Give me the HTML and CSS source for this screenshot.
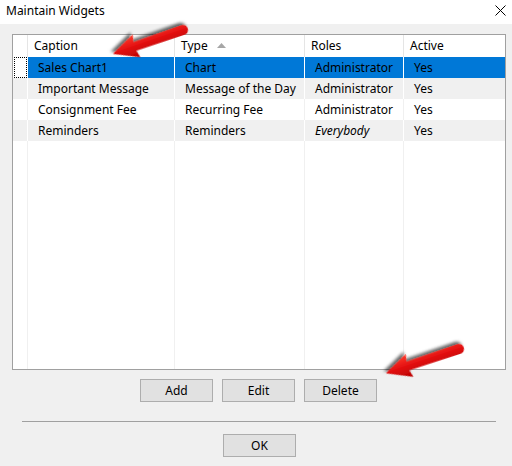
FILE: index.html
```html
<!DOCTYPE html>
<html>
<head>
<meta charset="utf-8">
<link rel="stylesheet" href="styles.css">
</head>
<body>
<div class="window">
  <div class="titlebar">
    <span class="title">Maintain Widgets</span>
    <svg class="close" width="11" height="11" viewBox="0 0 11 11"><path d="M0.5 0.5 L10.5 10.5 M10.5 0.5 L0.5 10.5" stroke="#000" stroke-width="1" fill="none"/></svg>
  </div>
  <div class="content">
    <div class="grid">
      <div class="col col-ind">
        <div class="hcell"></div>
        <div class="cell sel-ind"><span class="focus"></span></div>
        <div class="cell alt"></div>
        <div class="cell"></div>
        <div class="cell alt"></div>
        <div class="fill"></div>
      </div>
      <div class="col col-caption">
        <div class="hcell">Caption</div>
        <div class="cell sel">Sales Chart1</div>
        <div class="cell alt">Important Message</div>
        <div class="cell">Consignment Fee</div>
        <div class="cell alt">Reminders</div>
        <div class="fill"></div>
      </div>
      <div class="col col-type">
        <div class="hcell">Type<svg class="sort" width="9" height="5" viewBox="0 0 9 5"><path d="M0 5 L4.5 0 L9 5 Z" fill="#a6a6a6"/></svg></div>
        <div class="cell sel">Chart</div>
        <div class="cell alt">Message of the Day</div>
        <div class="cell">Recurring Fee</div>
        <div class="cell alt">Reminders</div>
        <div class="fill"></div>
      </div>
      <div class="col col-roles">
        <div class="hcell">Roles</div>
        <div class="cell sel">Administrator</div>
        <div class="cell alt">Administrator</div>
        <div class="cell">Administrator</div>
        <div class="cell alt italic">Everybody</div>
        <div class="fill"></div>
      </div>
      <div class="col col-active">
        <div class="hcell">Active</div>
        <div class="cell sel">Yes</div>
        <div class="cell alt">Yes</div>
        <div class="cell">Yes</div>
        <div class="cell alt">Yes</div>
        <div class="fill"></div>
      </div>
    </div>
    <div class="buttons">
      <button class="btn">Add</button>
      <button class="btn">Edit</button>
      <button class="btn">Delete</button>
    </div>
    <div class="separator"></div>
    <div class="okrow">
      <button class="btn">OK</button>
    </div>
  </div>
  <svg class="arrows" width="512" height="466" viewBox="0 0 512 466">
    <defs>
      <linearGradient id="red" x1="0" y1="0" x2="0" y2="1">
        <stop offset="0" stop-color="#b80000"/>
        <stop offset="0.55" stop-color="#e51212"/>
        <stop offset="1" stop-color="#ff3b2b"/>
      </linearGradient>
      <filter id="shadow" x="-20%" y="-40%" width="150%" height="190%">
        <feDropShadow dx="1.5" dy="3" stdDeviation="1.6" flood-color="#000" flood-opacity="0.6"/>
      </filter>
    </defs>
    <path transform="translate(183 30) rotate(161.1)" filter="url(#shadow)" fill="url(#red)"
      d="M0,-5 L51,-4.5 L49,-12 L74,0 L49,12 L51,4.5 L0,5 A5,5 0 0 1 0,-5 Z"/>
    <path transform="translate(459 349) rotate(161.57)" filter="url(#shadow)" fill="url(#red)"
      d="M0,-5 L54,-4.5 L52,-12 L77,0 L52,12 L54,4.5 L0,5 A5,5 0 0 1 0,-5 Z"/>
  </svg>
</div>
</body>
</html>
```

FILE: styles.css
```css
html, body {
  margin: 0;
  padding: 0;
}
body {
  background: #f0f0f0;
  font-family: "Noto Sans", "Open Sans", sans-serif;
  font-size: 12px;
  color: #000;
}
.window {
  position: relative;
  width: 512px;
  height: 466px;
  overflow: hidden;
}
.titlebar {
  height: 24px;
  background: #fff;
  display: flex;
  align-items: center;
  justify-content: space-between;
  padding: 0 6px 0 6px;
  box-sizing: border-box;
}
.title {
  line-height: 24px;
  margin-top: -2px;
}
.close {
  margin-top: -4px;
  margin-right: 0;
}
.content {
  padding: 10px 0 0 12px;
}
.grid {
  width: 494px;
  height: 336px;
  box-sizing: border-box;
  border: 1px solid #a0a0a0;
  background: #fff;
  display: flex;
}
.col {
  display: flex;
  flex-direction: column;
}
.col-ind { width: 14px; }
.col-caption { width: 147px; }
.col-type { width: 130px; }
.col-roles { width: 99px; }
.col-active { flex: 1; }
.hcell {
  height: 22px;
  line-height: 22px;
  padding-left: 6px;
  border-left: 1px solid #e5e5e5;
  background: #fff;
  white-space: nowrap;
  display: flex;
  align-items: center;
}
.cell {
  height: 21px;
  line-height: 21px;
  padding-left: 10px;
  border-left: 1px solid #f0f0f0;
  background: #fff;
  white-space: nowrap;
  overflow: hidden;
}
.fill {
  flex: 1;
  border-left: 1px solid #f0f0f0;
}
.col-ind .hcell,
.col-ind .cell,
.col-ind .fill {
  border-left: none;
  padding-left: 0;
}
.alt {
  background: #f0f0f0;
  border-left-color: #fff;
}
.sel {
  background: #0078d7;
  border-left-color: #fff;
}
.sel-ind {
  position: relative;
  background: #fff;
}
.focus {
  position: absolute;
  left: 1px;
  top: 0;
  width: 11px;
  height: 19px;
  border: 1px dotted #000;
}
.italic {
  font-style: italic;
}
.sort {
  margin-left: 9px;
  margin-top: -2px;
}
.buttons {
  display: flex;
  gap: 9px;
  padding-left: 128px;
  margin-top: 9px;
}
.btn {
  width: 73px;
  height: 23px;
  background: #e1e1e1;
  border: 1px solid #adadad;
  font-family: inherit;
  font-size: 12px;
  color: #000;
  padding: 0;
  margin: 0;
}
.separator {
  margin: 19px 0 0 10px;
  width: 474px;
  height: 1px;
  background: #a0a0a0;
}
.okrow {
  display: flex;
  padding-left: 211px;
  margin-top: 12px;
}
.arrows {
  position: absolute;
  left: 0;
  top: 0;
  pointer-events: none;
}
```
